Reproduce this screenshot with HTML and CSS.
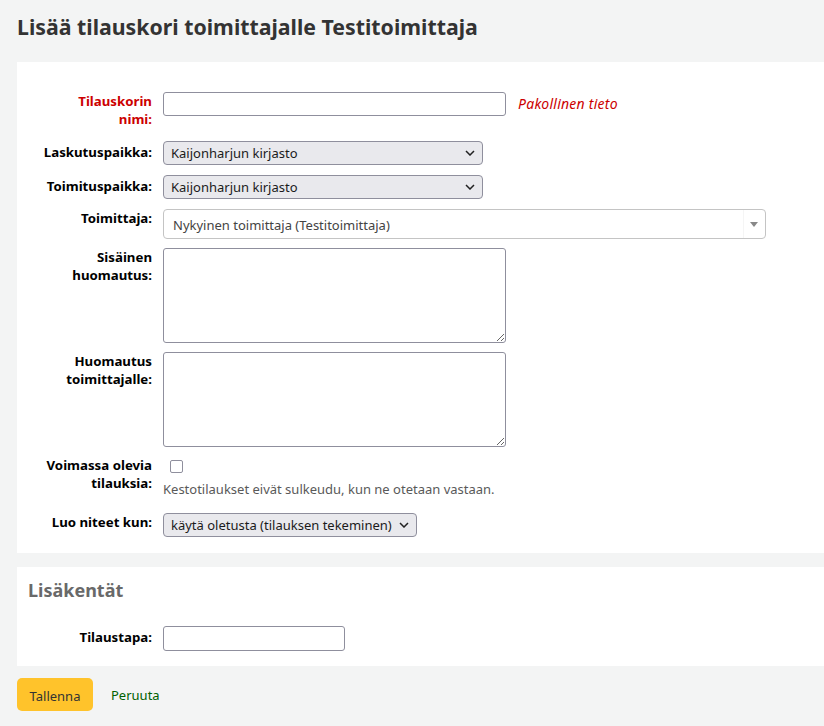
FILE: index.html
```html
<!DOCTYPE html>
<html lang="fi">
<head>
<meta charset="utf-8">
<title>Lisää tilauskori</title>
<link rel="stylesheet" href="styles.css">
</head>
<body>
<main class="page">
  <h1 class="title">Lisää tilauskori toimittajalle Testitoimittaja</h1>
  <form class="form">
    <section class="panel panel-main">
      <div class="row row-first">
        <label class="lbl lbl-required">Tilauskorin nimi:</label>
        <input class="text text-name" type="text">
        <span class="required-note">Pakollinen tieto</span>
      </div>
      <div class="row">
        <label class="lbl lbl-select">Laskutuspaikka:</label>
        <span class="select-wrap select-lib">
          <select class="select"><option>Kaijonharjun kirjasto</option></select>
          <svg class="chev" width="10" height="6" viewBox="0 0 10 6"><path d="M1 1l4 4 4-4" fill="none" stroke="#222" stroke-width="1.5"/></svg>
        </span>
      </div>
      <div class="row">
        <label class="lbl lbl-select">Toimituspaikka:</label>
        <span class="select-wrap select-lib">
          <select class="select"><option>Kaijonharjun kirjasto</option></select>
          <svg class="chev" width="10" height="6" viewBox="0 0 10 6"><path d="M1 1l4 4 4-4" fill="none" stroke="#222" stroke-width="1.5"/></svg>
        </span>
      </div>
      <div class="row row-s2">
        <label class="lbl">Toimittaja:</label>
        <span class="select2">
          <span class="select2-text">Nykyinen toimittaja (Testitoimittaja)</span>
          <span class="select2-arrow"><svg width="8" height="5" viewBox="0 0 8 5"><path d="M0 0h8L4 5z" fill="#888"/></svg></span>
        </span>
      </div>
      <div class="row row-area">
        <label class="lbl">Sisäinen huomautus:</label>
        <textarea class="area"></textarea>
      </div>
      <div class="row row-area">
        <label class="lbl">Huomautus toimittajalle:</label>
        <textarea class="area"></textarea>
      </div>
      <div class="row row-check">
        <label class="lbl">Voimassa olevia tilauksia:</label>
        <div class="check-col">
          <input class="check" type="checkbox">
          <div class="hint">Kestotilaukset eivät sulkeudu, kun ne otetaan vastaan.</div>
        </div>
      </div>
      <div class="row row-last">
        <label class="lbl lbl-select2">Luo niteet kun:</label>
        <span class="select-wrap select-create">
          <select class="select"><option>käytä oletusta (tilauksen tekeminen)</option></select>
          <svg class="chev" width="10" height="6" viewBox="0 0 10 6"><path d="M1 1l4 4 4-4" fill="none" stroke="#222" stroke-width="1.5"/></svg>
        </span>
      </div>
    </section>
    <section class="panel panel-extra">
      <h2 class="subtitle">Lisäkentät</h2>
      <div class="row row-last">
        <label class="lbl lbl-select">Tilaustapa:</label>
        <input class="text text-method" type="text">
      </div>
    </section>
    <div class="actions">
      <button class="btn-save" type="button">Tallenna</button>
      <a class="cancel" href="#">Peruuta</a>
    </div>
  </form>
</main>
</body>
</html>
```

FILE: styles.css
```css
html, body {
  margin: 0;
  padding: 0;
}
body {
  background: #f3f4f4;
  font-family: "Noto Sans", "Open Sans", sans-serif;
  font-size: 13px;
  color: #000;
  overflow: hidden;
}
.page {
  padding: 15px 0 0 17px;
}
.title {
  margin: 0 0 23px 0;
  font-size: 21.3px;
  line-height: 24px;
  font-weight: 700;
  color: #333;
}
.form {
  margin: 0;
}
.panel {
  background: #fff;
  display: flex;
  flex-direction: column;
}
.panel-main {
  padding: 30px 0 16px 0;
}
.panel-extra {
  margin-top: 14px;
  padding: 11px 0 15px 0;
}
.subtitle {
  margin: 0 0 23px 11px;
  font-size: 18px;
  line-height: 25px;
  font-weight: 700;
  color: #696969;
}
.row {
  display: flex;
  align-items: flex-start;
  margin-bottom: 10px;
}
.row-first { margin-bottom: 13px; }
.row-s2, .row-area { margin-bottom: 9px; }
.row-check { margin-bottom: 15px; }
.row-last { margin-bottom: 0; }
.lbl {
  box-sizing: border-box;
  flex: 0 0 135px;
  width: 135px;
  padding-left: 25px;
  margin-right: 11px;
  text-align: right;
  font-size: 13.25px;
  font-weight: 700;
  line-height: 18px;
  color: #000;
}
.lbl-required { color: #cc0000; }
.lbl-select { padding-top: 2px; }
.lbl-select2 { padding-top: 0; }
.text {
  box-sizing: border-box;
  height: 24px;
  border: 1px solid #8f8f9d;
  border-radius: 3px;
  background: #fff;
  font: inherit;
  padding: 0 6px;
  margin: 0;
}
.text-name { width: 343px; }
.text-method { width: 182px; height: 25px; }
.required-note {
  margin-left: 12px;
  line-height: 24px;
  font-size: 14px;
  letter-spacing: 0.25px;
  font-style: italic;
  color: #cc0000;
}
.select-wrap {
  position: relative;
  display: inline-block;
}
.select {
  appearance: none;
  -webkit-appearance: none;
  box-sizing: border-box;
  width: 100%;
  height: 24px;
  margin: 0;
  padding: 0 24px 0 7px;
  border: 1px solid #8f8f9d;
  border-radius: 4px;
  background: #e9e9ed;
  font: inherit;
  color: #1b1b1b;
}
.select-lib { width: 320px; }
.select-create { width: 254px; }
.chev {
  position: absolute;
  right: 8px;
  top: 9px;
  pointer-events: none;
}
.select2 {
  box-sizing: border-box;
  width: 603px;
  height: 30px;
  display: flex;
  align-items: center;
  border: 1px solid #c4c4c4;
  border-radius: 4px;
  background: #fff;
}
.select2-text {
  flex: 1;
  padding-left: 9px;
  color: #444;
  padding-top: 2px;
}
.select2-arrow {
  width: 20px;
  height: 28px;
  border-left: 1px solid #f5f5f5;
  display: flex;
  align-items: center;
  justify-content: center;
  margin-right: 1px;
}
.area {
  box-sizing: border-box;
  width: 343px;
  height: 95px;
  margin: 0;
  border: 1px solid #8f8f9d;
  border-radius: 3px;
  background: #fff;
  font: inherit;
  resize: both;
}
.check-col {
  display: flex;
  flex-direction: column;
  align-items: flex-start;
}
.check {
  appearance: none;
  -webkit-appearance: none;
  box-sizing: border-box;
  width: 13px;
  height: 13px;
  margin: 4px 0 0 7px;
  border: 1px solid #8f8f9d;
  border-radius: 2px;
  background: #fff;
}
.hint {
  margin-top: 7px;
  line-height: 18px;
  color: #595959;
}
.actions {
  display: flex;
  align-items: center;
  margin-top: 12px;
}
.btn-save {
  box-sizing: border-box;
  height: 33px;
  width: 76px;
  border: 0;
  border-radius: 5px;
  background: #ffc32b;
  font: inherit;
  color: #333;
  padding: 2px 0 0 0;
}
.cancel {
  margin-left: 18px;
  color: #006100;
  text-decoration: none;
}
```
